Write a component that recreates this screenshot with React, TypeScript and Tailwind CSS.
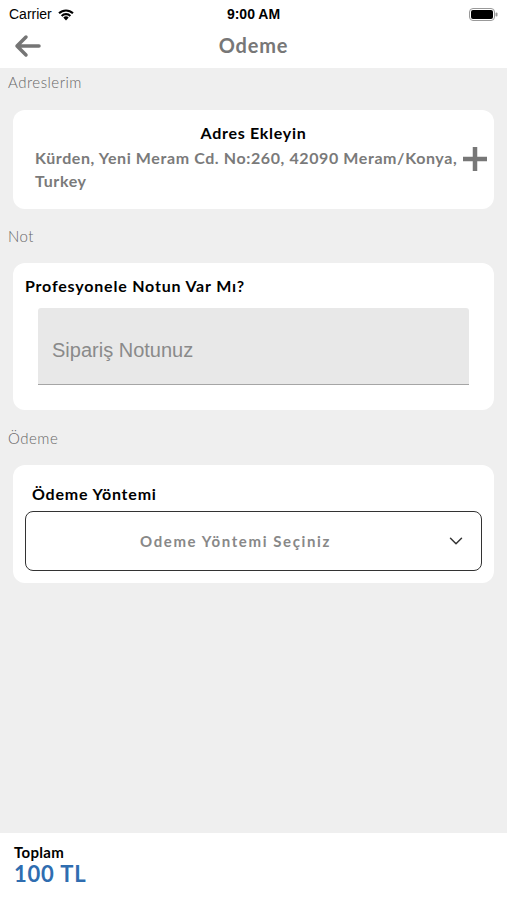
import { ChevronDown } from "lucide-react";

function StatusBar() {
  return (
    <div className="h-[28px] bg-white flex items-center justify-between px-[9px] relative" style={{ fontFamily: "'Liberation Sans', Arial, sans-serif" }}>
      <div className="flex items-center gap-[5px] text-[14px] text-black">
        <span>Carrier</span>
        <svg width="18" height="13" viewBox="0 0 18 13">
          <path d="M9 12.5 L6.3 9.6 A3.8 3.8 0 0 1 11.7 9.6 Z" fill="#000" />
          <path d="M3.9 7.2 A7.3 7.3 0 0 1 14.1 7.2 L12.6 8.7 A5.2 5.2 0 0 0 5.4 8.7 Z" fill="#000" />
          <path d="M1.3 4.6 A11 11 0 0 1 16.7 4.6 L15.2 6.1 A8.9 8.9 0 0 0 2.8 6.1 Z" fill="#000" />
        </svg>
      </div>
      <span className="absolute left-1/2 -translate-x-1/2 text-[14px] font-bold text-black">9:00 AM</span>
      <svg width="29" height="13" viewBox="0 0 29 13">
        <rect x="0.5" y="0.5" width="25" height="12" rx="3.5" fill="none" stroke="#999" />
        <rect x="2" y="2" width="22" height="9" rx="2" fill="#000" />
        <rect x="26.5" y="4.5" width="2" height="4" rx="1" fill="#999" />
      </svg>
    </div>
  );
}

function Header() {
  return (
    <div className="h-[40px] bg-white flex items-center relative">
      <svg className="ml-[13px] -mt-[4px]" width="28" height="24" viewBox="0 0 28 24">
        <path d="M26 12 H4 M13 3 L4 12 L13 21" fill="none" stroke="#757575" strokeWidth="3.5" strokeLinecap="round" strokeLinejoin="round" />
      </svg>
      <span className="absolute left-1/2 -translate-x-1/2 top-[3px] text-[20px] font-bold text-[#777] tracking-[0.8px] leading-[28px]">Odeme</span>
    </div>
  );
}

function SectionLabel({ children }: { children: React.ReactNode }) {
  return <div className="px-[8px] text-[15px] font-light text-[#666] leading-[20px] tracking-[0.5px]">{children}</div>;
}

export default function App() {
  return (
    <div className="w-[507px] h-[900px] flex flex-col bg-[#efefef]" style={{ fontFamily: "Lato, 'Noto Sans', sans-serif" }}>
      <StatusBar />
      <Header />
      <div className="flex-1 flex flex-col pt-[4px]">
        <SectionLabel>Adreslerim</SectionLabel>
        <div className="mx-[13px] mt-[18px] bg-white rounded-[12px] h-[99px] pt-[12px] px-[22px] relative">
          <div className="text-center text-[16px] font-bold text-black leading-[22px] tracking-[0.7px]">Adres Ekleyin</div>
          <div className="text-[16px] font-bold text-[#7a7a7a] leading-[23px] mt-[2px] tracking-[0.6px]">
            Kürden, Yeni Meram Cd. No:260, 42090 Meram/Konya, Turkey
          </div>
          <svg className="absolute right-[6px] top-[36px]" width="26" height="26" viewBox="0 0 26 26">
            <path d="M13 1 V25 M1 13 H25" stroke="#777" strokeWidth="4.5" />
          </svg>
        </div>
        <div className="mt-[17px]">
          <SectionLabel>Not</SectionLabel>
        </div>
        <div className="mx-[13px] mt-[17px] bg-white rounded-[12px] h-[147px] pt-[12px] px-[12px]">
          <div className="text-[16px] font-bold text-black leading-[22px] tracking-[0.8px]">Profesyonele Notun Var Mı?</div>
          <div className="mx-[13px] mt-[11px] h-[77px] bg-[#e8e8e8] rounded-t-[3px] border-b border-[#a5a5a5] flex items-center px-[14px] pt-[7px]">
            <span className="text-[20px] text-[#8a8a8a]" style={{ fontFamily: "'Liberation Sans', Arial, sans-serif" }}>Sipariş Notunuz</span>
          </div>
        </div>
        <div className="mt-[18px]">
          <SectionLabel>Ödeme</SectionLabel>
        </div>
        <div className="mx-[13px] mt-[17px] bg-white rounded-[12px] h-[118px] pt-[18px] px-[12px]">
          <div className="pl-[7px] text-[16px] font-bold text-black leading-[22px] tracking-[0.8px]">Ödeme Yöntemi</div>
          <div className="mt-[6px] h-[60px] border-[1.5px] border-[#333] rounded-[8px] flex items-center relative">
            <span className="flex-1 text-center pr-[36px] text-[15px] font-bold text-[#888] tracking-[1.6px]">Odeme Yöntemi Seçiniz</span>
            <ChevronDown className="absolute right-[14px]" size={22} color="#333" strokeWidth={1.6} />
          </div>
        </div>
      </div>
      <div className="h-[67px] bg-white px-[14px] pt-[10px] flex flex-col">
        <div className="text-[15px] font-bold text-black leading-[19px] tracking-[0.3px]">Toplam</div>
        <div className="text-[22px] font-bold text-[#2f6db0] leading-[23px] tracking-[0.8px]">100 TL</div>
      </div>
    </div>
  );
}
